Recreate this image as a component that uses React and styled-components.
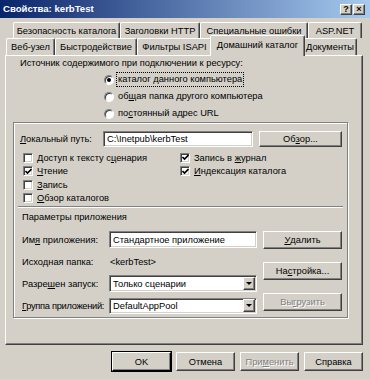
import React from 'react';
import styled, { createGlobalStyle, css } from 'styled-components';

const GlobalStyle = createGlobalStyle`
  html, body {
    margin: 0;
    padding: 0;
    background: #d4d0c8;
  }
  body {
    font-family: "Liberation Sans", Arial, sans-serif;
    font-size: 9.3px;
    line-height: 12px;
    color: #000;
  }
`;

const raised = css`
  border-top: 1px solid #fff;
  border-left: 1px solid #fff;
  border-right: 1px solid #404040;
  border-bottom: 1px solid #404040;
  box-shadow: inset -1px -1px 0 #808080;
`;

const sunken = css`
  border-top: 1px solid #808080;
  border-left: 1px solid #808080;
  border-right: 1px solid #fff;
  border-bottom: 1px solid #fff;
  box-shadow: inset 1px 1px 0 #404040, inset -1px -1px 0 #d4d0c8;
`;

const Window = styled.div`
  width: 370px;
  height: 379px;
  box-sizing: border-box;
  display: flex;
  flex-direction: column;
  background: #d4d0c8;
  overflow: hidden;
`;

const TitleBar = styled.div`
  height: 18px;
  flex: none;
  display: flex;
  align-items: center;
  justify-content: space-between;
  padding: 0 5px 0 3px;
  background: linear-gradient(to right, #0a246a, #a6caf0);
`;

const Title = styled.span`
  color: #fff;
  font-weight: bold;
  font-size: 9.6px;
`;

const CapButtons = styled.div`
  display: flex;
  gap: 1px;
`;

const CapButton = styled.div`
  box-sizing: border-box;
  width: 12px;
  height: 11px;
  background: #d4d0c8;
  ${raised};
  display: flex;
  align-items: center;
  justify-content: center;
  font-weight: bold;
  font-size: 9px;
  line-height: 9px;
`;

const Body = styled.div`
  flex: 1;
  display: flex;
  flex-direction: column;
  padding: 4px 7px 0 5px;
`;

const TabRow = styled.div`
  display: flex;
  align-items: flex-end;
  height: ${p => p.$h}px;
  padding-left: ${p => p.$indent}px;
`;

const Tab = styled.div`
  box-sizing: border-box;
  flex: none;
  width: ${p => p.$w}px;
  height: ${p => p.$h}px;
  display: flex;
  align-items: center;
  justify-content: center;
  white-space: nowrap;
  background: #d4d0c8;
  border-top: 1px solid #fff;
  border-left: 1px solid #fff;
  border-right: 1px solid #404040;
  box-shadow: inset -1px 0 0 #808080;
  border-radius: 2px 2px 0 0;
  ${p => p.$active && css`
    position: relative;
    z-index: 1;
    width: ${p.$w + 4}px;
    height: ${p.$h + 4}px;
    margin: 0 -2px -1px;
    padding-bottom: 2px;
  `}
`;

const Panel = styled.div`
  box-sizing: border-box;
  height: 290px;
  ${raised};
  padding: 1px 14px 0 7px;
  display: flex;
  flex-direction: column;
`;

const Heading = styled.div`
  margin-left: 7px;
  height: 12px;
  margin-bottom: 2px;
`;

const RadioList = styled.div`
  margin-left: 91px;
  display: flex;
  flex-direction: column;
`;

const Option = styled.label`
  height: 17px;
  display: flex;
  align-items: center;
  gap: 3px;
  white-space: nowrap;
`;

const Radio = styled.span`
  box-sizing: border-box;
  width: 10px;
  height: 10px;
  border-radius: 50%;
  background: #fff;
  border: 1px solid;
  border-color: #808080 #fff #fff #808080;
  box-shadow: inset 1px 1px 0 #404040;
  display: flex;
  align-items: center;
  justify-content: center;
  &::after {
    content: '';
    width: 4px;
    height: 4px;
    border-radius: 50%;
    background: ${p => (p.$on ? '#000' : 'transparent')};
  }
`;

const OptionText = styled.span`
  padding: 0 1px;
  outline: ${p => (p.$focus ? '1px dotted #000' : 'none')};
  line-height: 13px;
`;

const Frame = styled.div`
  box-sizing: border-box;
  height: 196px;
  border: 1px solid #808080;
  box-shadow: inset 1px 1px 0 #fff, 1px 1px 0 #fff;
  display: flex;
  flex-direction: column;
`;

const PathRow = styled.div`
  display: flex;
  align-items: center;
  margin: 8px 0 0 6px;
  height: 16px;
`;

const Label = styled.span`
  flex: none;
  width: ${p => (p.$w ? `${p.$w}px` : 'auto')};
  white-space: nowrap;
  letter-spacing: ${p => (p.$tight ? '-0.3px' : 'normal')};
`;

const TextBox = styled.div`
  box-sizing: border-box;
  width: ${p => p.$w}px;
  height: ${p => p.$h || 17}px;
  margin-right: ${p => p.$mr || 0}px;
  background: #fff;
  ${sunken};
  padding: 0 3px;
  display: flex;
  align-items: center;
  white-space: nowrap;
`;

const Button = styled.div`
  box-sizing: border-box;
  flex: none;
  width: ${p => p.$w}px;
  height: ${p => p.$h || 18}px;
  background: #d4d0c8;
  ${raised};
  display: flex;
  align-items: center;
  justify-content: center;
  white-space: nowrap;
  color: ${p => (p.$disabled ? '#808080' : '#000')};
  text-shadow: ${p => (p.$disabled ? '1px 1px 0 #fff' : 'none')};
  ${p => p.$default && css`
    outline: 1px solid #000;
    outline-offset: 0;
    border-right-color: #000;
    border-bottom-color: #000;
  `}
`;

const Checks = styled.div`
  display: flex;
  margin: 4px 0 0 9px;
  height: 54px;
`;

const CheckColumn = styled.div`
  width: ${p => p.$w}px;
  display: flex;
  flex-direction: column;
`;

const CheckItem = styled.label`
  height: 13.5px;
  display: flex;
  align-items: center;
  gap: 4px;
  white-space: nowrap;
`;

const Box = styled.span`
  box-sizing: border-box;
  width: 10px;
  height: 10px;
  flex: none;
  background: #fff;
  ${sunken};
  display: flex;
  align-items: center;
  justify-content: center;
`;

const Separator = styled.div`
  margin: 1px 4px 0;
  height: 0;
  border-top: 1px solid #808080;
  border-bottom: 1px solid #fff;
`;

const SectionTitle = styled.div`
  margin: 3px 0 0 8px;
  height: 12px;
`;

const AppArea = styled.div`
  display: flex;
  margin: 8px 0 0 8px;
  gap: 6px;
`;

const Fields = styled.div`
  display: grid;
  grid-template-columns: 87px 148px;
  grid-auto-rows: 17px;
  row-gap: 5px;
  align-items: center;
`;

const Plain = styled.span`
  padding-left: 1px;
`;

const Select = styled(TextBox)`
  justify-content: space-between;
  padding-right: 1px;
`;

const Drop = styled.span`
  box-sizing: border-box;
  width: 12px;
  height: 13px;
  background: #d4d0c8;
  ${raised};
  display: flex;
  align-items: center;
  justify-content: center;
  &::after {
    content: '';
    border-left: 3px solid transparent;
    border-right: 3px solid transparent;
    border-top: 3px solid #000;
  }
`;

const ButtonColumn = styled.div`
  display: flex;
  flex-direction: column;
  gap: 13px;
`;

const Footer = styled.div`
  display: flex;
  justify-content: flex-end;
  gap: 5px;
  margin-top: 7px;
`;

const Check = ({ on, children }) => (
  <CheckItem>
    <Box>
      {on && (
        <svg width="7" height="7" viewBox="0 0 7 7">
          <path d="M0.5 3 L2.5 5 L6.5 1" fill="none" stroke="#000" strokeWidth="1.6" />
        </svg>
      )}
    </Box>
    <span>{children}</span>
  </CheckItem>
);

const App = () => {
  return (
    <Window>
      <GlobalStyle />
      <TitleBar>
        <Title>Свойства: kerbTest</Title>
        <CapButtons>
          <CapButton>?</CapButton>
          <CapButton>×</CapButton>
        </CapButtons>
      </TitleBar>
      <Body>
        <TabRow $h={16} $indent={8}>
          <Tab $w={107} $h={16}>Безопасность каталога</Tab>
          <Tab $w={80} $h={16}>Заголовки HTTP</Tab>
          <Tab $w={108} $h={16}>Специальные ошибки</Tab>
          <Tab $w={54} $h={16}>ASP.NET</Tab>
        </TabRow>
        <TabRow $h={17} $indent={1}>
          <Tab $w={49} $h={17}>Веб-узел</Tab>
          <Tab $w={82} $h={17}>Быстродействие</Tab>
          <Tab $w={75} $h={17}>Фильтры ISAPI</Tab>
          <Tab $w={91} $h={17} $active>Домашний каталог</Tab>
          <Tab $w={54} $h={17}>Документы</Tab>
        </TabRow>
        <Panel>
          <Heading>Источник содержимого при подключении к ресурсу:</Heading>
          <RadioList>
            <Option>
              <Radio $on />
              <OptionText $focus>каталог <u>д</u>анного компьютера</OptionText>
            </Option>
            <Option>
              <Radio />
              <OptionText>об<u>щ</u>ая папка другого компьютера</OptionText>
            </Option>
            <Option>
              <Radio />
              <OptionText>по<u>с</u>тоянный адрес URL</OptionText>
            </Option>
          </RadioList>
          <Frame>
            <PathRow>
              <Label $w={83}><u>Л</u>окальный путь:</Label>
              <TextBox $w={150} $h={16} $mr={6}>C:\Inetpub\kerbTest</TextBox>
              <Button $w={83} $h={16}>Об<u>з</u>ор...</Button>
            </PathRow>
            <Checks>
              <CheckColumn $w={157}>
                <Check>Доступ к тексту с<u>ц</u>енария</Check>
                <Check on><u>Ч</u>тение</Check>
                <Check><u>З</u>апись</Check>
                <Check><u>О</u>бзор каталогов</Check>
              </CheckColumn>
              <CheckColumn $w={160}>
                <Check on>Запись в <u>ж</u>урнал</Check>
                <Check on><u>И</u>ндексация каталога</Check>
              </CheckColumn>
            </Checks>
            <Separator />
            <SectionTitle>Параметры приложения</SectionTitle>
            <AppArea>
              <Fields>
                <Label>Им<u>я</u> приложения:</Label>
                <TextBox $w={148}>Стандартное приложение</TextBox>
                <Label>Исходная папка:</Label>
                <Plain>&lt;kerbTest&gt;</Plain>
                <Label>Разре<u>ш</u>ен запуск:</Label>
                <Select $w={148}>Только сценарии<Drop /></Select>
                <Label $tight><u>Г</u>руппа приложений:</Label>
                <Select $w={148} $h={16}>DefaultAppPool<Drop /></Select>
              </Fields>
              <ButtonColumn>
                <Button $w={79}><u>У</u>далить</Button>
                <Button $w={79}>На<u>с</u>тройка...</Button>
                <Button $w={79} $disabled>Вы<u>г</u>рузить</Button>
              </ButtonColumn>
            </AppArea>
          </Frame>
        </Panel>
        <Footer>
          <Button $w={59} $h={19} $default>OK</Button>
          <Button $w={59} $h={19}>Отмена</Button>
          <Button $w={59} $h={19} $disabled>При<u>м</u>енить</Button>
          <Button $w={59} $h={19}>Справка</Button>
        </Footer>
      </Body>
    </Window>
  );
};

export default App;
